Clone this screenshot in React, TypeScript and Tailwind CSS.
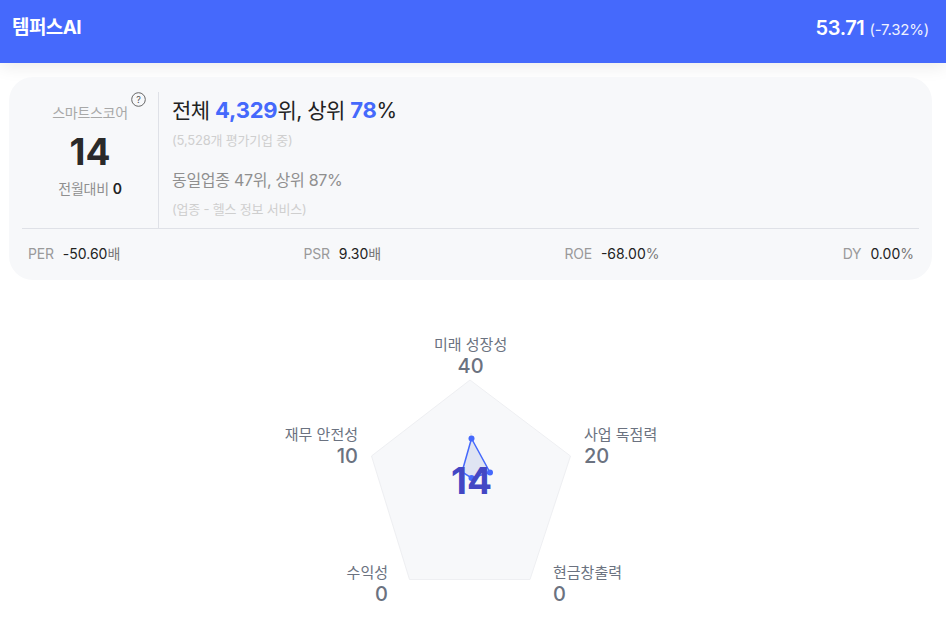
function Metric({ label, value, unit }: { label: string; value: string; unit: string }) {
  return (
    <div className="flex items-center gap-[9px] text-[14px] leading-[20px]">
      <span className="tracking-[-0.2px] text-[#9a9a9a]">{label}</span>
      <span className="text-[#222222]">
        {value}
        <span className="text-[#777777]">{unit}</span>
      </span>
    </div>
  );
}

function ChartLabel({ className, title, value }: { className: string; title: string; value: string }) {
  return (
    <div className={`absolute flex flex-col ${className}`}>
      <span className="text-[15px] leading-[20px] text-[#6b7280]">{title}</span>
      <span className="text-[20px] leading-[22px] font-medium text-[#6b7280]">{value}</span>
    </div>
  );
}

export default function App() {
  return (
    <div className="h-[637px] w-[946px] overflow-hidden bg-white font-['Inter','Noto_Sans_CJK_KR',sans-serif]">
      <header className="flex h-[63px] items-start justify-between bg-[#4569fc] pl-[12px] pr-[17px] pt-[16px] text-white shadow-[0_4px_16px_rgba(0,0,0,0.08)]">
        <span className="text-[19px] leading-[24px] font-bold tracking-[-0.6px]">템퍼스AI</span>
        <span className="flex items-baseline gap-[5px]">
          <span className="text-[20px] leading-[24px] font-semibold tracking-[-0.4px]">53.71</span>
          <span className="text-[15px] leading-[24px] tracking-[-0.2px] text-[#eef1ff]">(-7.32%)</span>
        </span>
      </header>

      <section className="mx-[9px] mt-[14px] h-[203px] w-[923px] rounded-[24px] bg-[#f7f8fa] px-[13px] pt-[15px]">
        <div className="flex h-[137px] border-b border-[#dfe1e7]">
          <div className="relative flex w-[137px] flex-col items-center border-r border-[#dfe1e7] pt-[11px]">
            <span className="text-[14px] leading-[20px] tracking-[-0.3px] text-[#a8a8a8]">스마트스코어</span>
            <svg className="absolute left-[109px] top-0" width="15" height="15" viewBox="0 0 15 15" fill="none">
              <circle cx="7.5" cy="7.5" r="6.8" stroke="#666" strokeWidth="1" />
              <text x="7.5" y="10.8" textAnchor="middle" fontSize="9" fill="#555">?</text>
            </svg>
            <span className="mt-[7px] text-[37px] leading-[44px] font-bold text-[#2a2a2a]">14</span>
            <span className="mt-[5px] text-[14px] leading-[20px] tracking-[-0.2px] text-[#8f8f8f]">
              전월대비 <b className="font-semibold text-[#222222]">0</b>
            </span>
          </div>
          <div className="flex flex-col pl-[13px]">
            <div className="mt-[2px] text-[21px] leading-[32px] tracking-[-0.5px] text-[#222222]">
              전체 <b className="text-[22px] font-bold tracking-[-0.2px] text-[#4569fc]">4,329</b>위, 상위 <b className="text-[22px] font-bold tracking-[-0.2px] text-[#4569fc]">78</b>%
            </div>
            <div className="mt-[4px] text-[13px] leading-[18px] tracking-[-0.2px] text-[#cfcfcf]">(5,528개 평가기업 중)</div>
            <div className="mt-[20px] text-[16px] leading-[22px] tracking-[-0.3px] text-[#8f8f8f]">동일업종 47위, 상위 87%</div>
            <div className="mt-[9px] text-[13px] leading-[18px] tracking-[-0.2px] text-[#cfcfcf]">(업종 - 헬스 정보 서비스)</div>
          </div>
        </div>
        <div className="flex items-center justify-between pl-[6px] pr-[5px] pt-[15px]">
          <Metric label="PER" value="-50.60" unit="배" />
          <Metric label="PSR" value="9.30" unit="배" />
          <Metric label="ROE" value="-68.00" unit="%" />
          <Metric label="DY" value="0.00" unit="%" />
        </div>
      </section>

      <section className="relative mt-[50px] h-[271px] w-full overflow-hidden">
        <svg className="absolute left-0 top-0" width="946" height="271" viewBox="0 330 946 271">
          <polygon points="470,380 570.5,456 530,579.5 409.5,579.5 371.5,456" fill="#f7f8fa" stroke="#eeeff2" strokeWidth="1" />
          <line x1="471" y1="433" x2="471" y2="438" stroke="#dddfe6" strokeWidth="1" />
          <polygon points="471.5,438.5 490,472.5 471.5,478 462,472" fill="#dfe4f3" stroke="#4569fc" strokeWidth="1.5" />
          <circle cx="471.5" cy="438.5" r="3" fill="#4569fc" />
          <circle cx="490" cy="472.5" r="3" fill="#4569fc" />
          <circle cx="471.5" cy="478" r="3" fill="#4569fc" />
        </svg>
        <div className="absolute left-[451px] top-[129px] text-[37px] leading-[44px] font-bold text-[#4347c4]">14</div>
        <ChartLabel className="left-[434px] top-[5px] items-center" title="미래 성장성" value="40" />
        <ChartLabel className="left-[584px] top-[95px] items-start" title="사업 독점력" value="20" />
        <ChartLabel className="left-[553px] top-[233px] items-start" title="현금창출력" value="0" />
        <ChartLabel className="right-[558px] top-[233px] items-end" title="수익성" value="0" />
        <ChartLabel className="right-[588px] top-[95px] items-end" title="재무 안전성" value="10" />
      </section>
    </div>
  );
}
